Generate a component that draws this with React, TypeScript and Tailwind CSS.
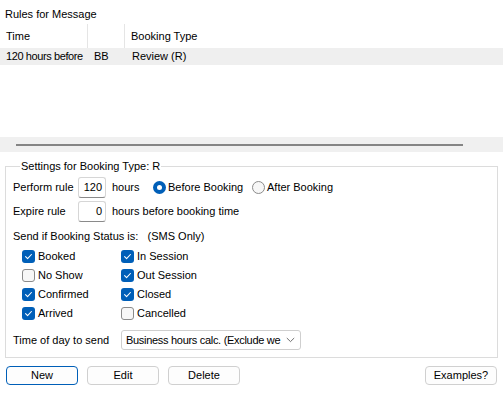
import { ReactNode } from 'react'

function Check({ checked, label }: { checked: boolean; label: string }) {
  return (
    <div className="flex items-center h-[19px] gap-[3px]">
      {checked ? (
        <span className="w-[13px] h-[13px] rounded-[3px] bg-[#005fb8] flex items-center justify-center">
          <svg width="9" height="9" viewBox="0 0 9 9">
            <path d="M1.6 4.7 L3.6 6.6 L7.4 2.5" fill="none" stroke="#fff" strokeWidth="1.1" strokeLinecap="round" strokeLinejoin="round" />
          </svg>
        </span>
      ) : (
        <span className="w-[13px] h-[13px] rounded-[3px] border border-[#8b8b8b] bg-[#f7f7f7]" />
      )}
      <span>{label}</span>
    </div>
  )
}

function Radio({ checked }: { checked: boolean }) {
  return checked ? (
    <span className="w-[13px] h-[13px] rounded-full bg-[#005fb8] flex items-center justify-center">
      <span className="w-[5px] h-[5px] rounded-full bg-white" />
    </span>
  ) : (
    <span className="w-[13px] h-[13px] rounded-full border border-[#8b8b8b] bg-[#f7f7f7]" />
  )
}

function TextBox({ value }: { value: string }) {
  return (
    <div className="w-[28px] h-[21px] border border-[#d6d6d6] border-b-[#8a8a8a] rounded-[3px] flex items-center justify-end pr-[3px] bg-white">
      {value}
    </div>
  )
}

function Button({ children, primary }: { children: ReactNode; primary?: boolean }) {
  return (
    <button
      className={
        primary
          ? 'w-[72px] h-[19px] rounded-[4px] border border-[#005fb8] bg-[#fdfdfd] flex items-center justify-center'
          : 'w-[72px] h-[19px] rounded-[4px] border border-[#d0d0d0] bg-[#fdfdfd] flex items-center justify-center'
      }
    >
      {children}
    </button>
  )
}

export default function App() {
  return (
    <div className="w-[503px] h-[393px] bg-white text-[11px] text-black overflow-hidden" style={{ fontFamily: '"Liberation Sans", Arial, sans-serif' }}>
      {/* list title */}
      <div className="h-[24px] pt-[6px] pl-[5px] leading-[16px]">Rules for Message</div>

      {/* list view */}
      <div className="h-[128px] flex flex-col">
        <div className="h-[24px] flex items-center">
          <div className="w-[88px] h-full flex items-center pl-[6px] border-r border-[#e5e5e5]">Time</div>
          <div className="w-[37px] h-full border-r border-[#e5e5e5]" />
          <div className="pl-[6px]">Booking Type</div>
        </div>
        <div className="h-[17px] flex items-center bg-[#efefef]">
          <div className="w-[88px] pl-[6px] whitespace-nowrap tracking-[-0.4px]">120 hours before</div>
          <div className="w-[38px] pl-[6px]">BB</div>
          <div className="pl-[6px]">Review (R)</div>
        </div>
        <div className="flex-1" />
        <div className="h-[15px] bg-[#f0f0f0] flex items-center pl-[16px]">
          <div className="w-[447px] h-[2px] bg-[#858585]" />
        </div>
      </div>

      {/* settings group */}
      <fieldset className="mt-[6px] mx-[5px] border border-[#dcdcdc] pl-[7px] pb-[7px]">
        <legend className="ml-[7px] px-[1px] leading-[16px]">Settings for Booking Type: R</legend>

        <div className="mt-[3px] h-[21px] flex items-center">
          <span className="w-[65px]">Perform rule</span>
          <TextBox value="120" />
          <span className="ml-[6px] w-[41px]">hours</span>
          <div className="w-[99px] flex items-center gap-[2px]">
            <Radio checked />
            <span>Before Booking</span>
          </div>
          <div className="flex items-center gap-[2px]">
            <Radio checked={false} />
            <span>After Booking</span>
          </div>
        </div>

        <div className="mt-[3px] h-[21px] flex items-center">
          <span className="w-[65px]">Expire rule</span>
          <TextBox value="0" />
          <span className="ml-[6px]">hours before booking time</span>
        </div>

        <div className="mt-[6px] h-[16px] flex items-center whitespace-pre">Send if Booking Status is:   (SMS Only)</div>

        <div className="mt-[3px] pl-[9px] grid grid-cols-[99px_1fr]">
          <Check checked label="Booked" />
          <Check checked label="In Session" />
          <Check checked={false} label="No Show" />
          <Check checked label="Out Session" />
          <Check checked label="Confirmed" />
          <Check checked label="Closed" />
          <Check checked label="Arrived" />
          <Check checked={false} label="Cancelled" />
        </div>

        <div className="mt-[7px] h-[20px] flex items-center">
          <span className="w-[108px]">Time of day to send</span>
          <div className="w-[180px] h-[20px] border border-[#cfcfcf] rounded-[3px] flex items-center pl-[4px] pr-[5px] bg-white">
            <span className="flex-1 whitespace-nowrap tracking-[-0.3px]">Business hours calc. (Exclude we</span>
            <svg width="9" height="6" viewBox="0 0 9 6" className="shrink-0">
              <path d="M0.8 1 L4.5 4.6 L8.2 1" fill="none" stroke="#5f5f5f" strokeWidth="0.9" />
            </svg>
          </div>
        </div>
      </fieldset>

      {/* buttons */}
      <div className="mt-[8px] flex items-center pl-[6px] pr-[6px] gap-[9px]">
        <Button primary>New</Button>
        <Button>Edit</Button>
        <Button>Delete</Button>
        <div className="ml-auto">
          <Button>Examples?</Button>
        </div>
      </div>
    </div>
  )
}
